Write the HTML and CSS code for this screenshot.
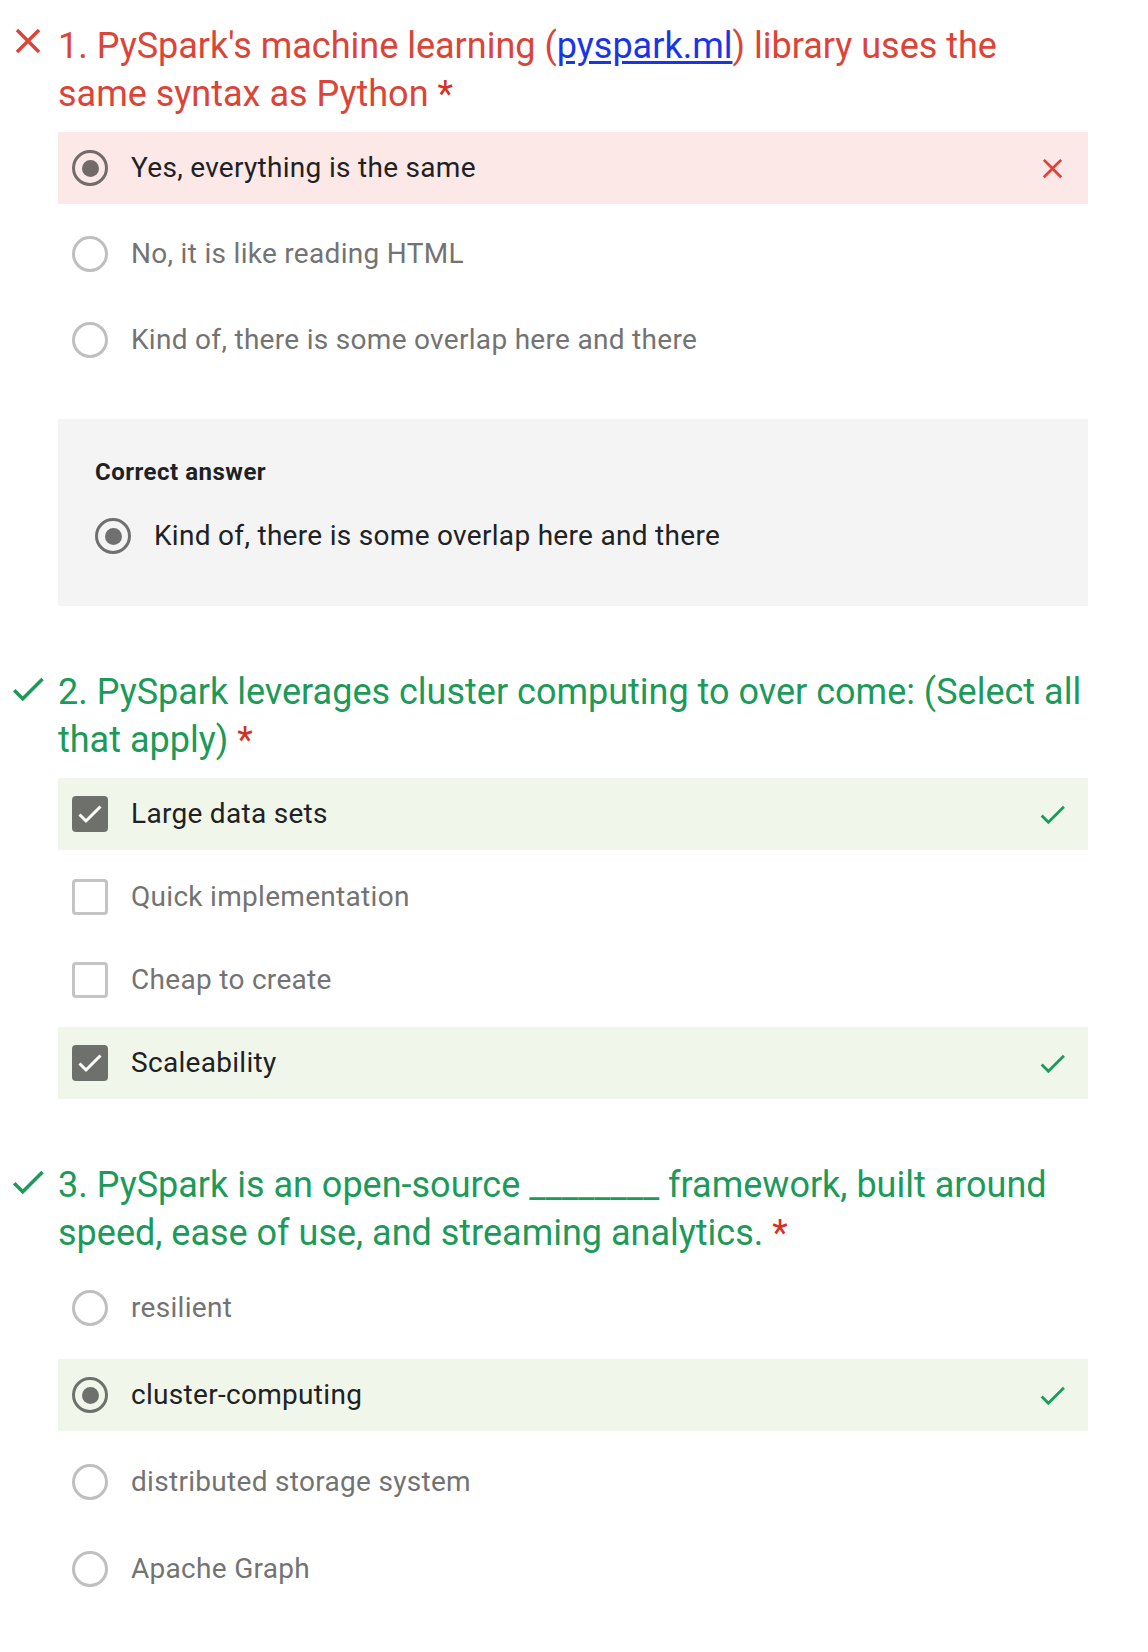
FILE: index.html
```html
<!DOCTYPE html>
<html lang="en">
<head>
<meta charset="utf-8">
<title>Quiz results</title>
<link rel="stylesheet" href="styles.css">
</head>
<body>
<div class="form">

  <section class="q">
    <div class="q-head">
      <svg class="q-icon q-icon-x" viewBox="0 0 24 24"><path d="M19 6.41L17.59 5 12 10.59 6.41 5 5 6.41 10.59 12 5 17.59 6.41 19 12 13.41 17.59 19 19 17.59 13.41 12z"/></svg>
      <div class="q-title wrong">1. PySpark's machine learning (<a href="#" class="link">pyspark.ml</a>) library uses the same syntax as Python <span class="req">*</span></div>
    </div>
    <div class="opts">
      <div class="opt opt-wrong">
        <span class="radio on"></span>
        <span class="opt-text sel">Yes, everything is the same</span>
        <svg class="mark mark-x" viewBox="0 0 24 24"><path d="M19 6.41L17.59 5 12 10.59 6.41 5 5 6.41 10.59 12 5 17.59 6.41 19 12 13.41 17.59 19 19 17.59 13.41 12z"/></svg>
      </div>
      <div class="opt">
        <span class="radio"></span>
        <span class="opt-text">No, it is like reading HTML</span>
      </div>
      <div class="opt">
        <span class="radio"></span>
        <span class="opt-text">Kind of, there is some overlap here and there</span>
      </div>
    </div>
    <div class="correct">
      <div class="correct-label">Correct answer</div>
      <div class="correct-opt">
        <span class="radio on"></span>
        <span class="opt-text sel">Kind of, there is some overlap here and there</span>
      </div>
    </div>
  </section>

  <section class="q">
    <div class="q-head">
      <svg class="q-icon q-icon-ok" viewBox="0 0 24 24"><path d="M9 16.17L4.83 12l-1.42 1.41L9 19 21 7l-1.41-1.41z"/></svg>
      <div class="q-title right">2. PySpark leverages cluster computing to over come: (Select all that apply) <span class="req">*</span></div>
    </div>
    <div class="opts opts-check">
      <div class="opt opt-right">
        <span class="box on"><svg viewBox="0 0 36 36"><polyline points="7.5,18.5 14,25 28.5,10.5"/></svg></span>
        <span class="opt-text sel">Large data sets</span>
        <svg class="mark mark-ok" viewBox="0 0 24 24"><path d="M9 16.17L4.83 12l-1.42 1.41L9 19 21 7l-1.41-1.41z"/></svg>
      </div>
      <div class="opt">
        <span class="box"></span>
        <span class="opt-text">Quick implementation</span>
      </div>
      <div class="opt">
        <span class="box"></span>
        <span class="opt-text">Cheap to create</span>
      </div>
      <div class="opt opt-right">
        <span class="box on"><svg viewBox="0 0 36 36"><polyline points="7.5,18.5 14,25 28.5,10.5"/></svg></span>
        <span class="opt-text sel">Scaleability</span>
        <svg class="mark mark-ok" viewBox="0 0 24 24"><path d="M9 16.17L4.83 12l-1.42 1.41L9 19 21 7l-1.41-1.41z"/></svg>
      </div>
    </div>
  </section>

  <section class="q">
    <div class="q-head">
      <svg class="q-icon q-icon-ok" viewBox="0 0 24 24"><path d="M9 16.17L4.83 12l-1.42 1.41L9 19 21 7l-1.41-1.41z"/></svg>
      <div class="q-title right">3. PySpark is an open-source ________ framework, built around speed, ease of use, and streaming analytics. <span class="req">*</span></div>
    </div>
    <div class="opts opts-loose">
      <div class="opt">
        <span class="radio"></span>
        <span class="opt-text">resilient</span>
      </div>
      <div class="opt opt-right">
        <span class="radio on"></span>
        <span class="opt-text sel">cluster-computing</span>
        <svg class="mark mark-ok" viewBox="0 0 24 24"><path d="M9 16.17L4.83 12l-1.42 1.41L9 19 21 7l-1.41-1.41z"/></svg>
      </div>
      <div class="opt">
        <span class="radio"></span>
        <span class="opt-text">distributed storage system</span>
      </div>
      <div class="opt">
        <span class="radio"></span>
        <span class="opt-text">Apache Graph</span>
      </div>
    </div>
  </section>

</div>
</body>
</html>
```

FILE: styles.css
```css
html, body {
  margin: 0;
  padding: 0;
  background: #ffffff;
}

body {
  font-family: Roboto, "Liberation Sans", Arial, sans-serif;
  color: #202124;
}

.form {
  width: 1088px;
  padding-top: 22px;
}

.q + .q {
  margin-top: 62px;
}

/* ---------- question heading ---------- */
.q-head {
  display: flex;
  align-items: flex-start;
  padding-left: 7px;
  gap: 9px;
}

.q-icon {
  flex: none;
  width: 42px;
  height: 42px;
}

.q-icon-x {
  fill: #db4437;
  margin-top: -2px;
}

.q-icon-ok {
  fill: #1b9a59;
}

.q-title {
  flex: 1;
  font-size: 36px;
  line-height: 48px;
  font-weight: 400;
}

.q-title.wrong {
  color: #db4437;
}

.q-title.right {
  color: #1b9a59;
}

.link {
  color: #1a35e6;
  text-decoration: underline;
  text-underline-offset: 3px;
}

.req {
  color: #d93025;
}

/* ---------- options ---------- */
.opts {
  margin-left: 58px;
  margin-top: 14px;
  display: flex;
  flex-direction: column;
  gap: 14px;
}

.opts-check {
  gap: 11px;
}

.opts-loose {
  margin-top: 15px;
  gap: 15px;
}

.opt {
  display: flex;
  align-items: center;
  height: 72px;
  padding: 0 19px 0 14px;
}

.opt-wrong {
  background: #fbe8e7;
}

.opt-right {
  background: #f0f6ea;
}

.opt-text {
  font-size: 28px;
  line-height: 36px;
  letter-spacing: 0.3px;
  color: #737373;
  margin-left: 23px;
}

.opt-text.sel {
  color: #202124;
}

.mark {
  flex: none;
  width: 33px;
  height: 33px;
  margin-left: auto;
}

.mark-x {
  fill: #db4437;
}

.mark-ok {
  fill: #1b9a59;
}

/* ---------- radio ---------- */
.radio {
  flex: none;
  box-sizing: border-box;
  width: 36px;
  height: 36px;
  border: 3.5px solid #bfbfbf;
  border-radius: 50%;
  display: flex;
  align-items: center;
  justify-content: center;
}

.radio.on {
  border-color: rgba(0, 0, 0, 0.54);
}

.radio.on::after {
  content: "";
  width: 17px;
  height: 17px;
  border-radius: 50%;
  background: rgba(0, 0, 0, 0.54);
}

/* ---------- checkbox ---------- */
.box {
  flex: none;
  box-sizing: border-box;
  width: 36px;
  height: 36px;
  border: 3.5px solid #c4c4c4;
  border-radius: 4px;
  display: flex;
  align-items: center;
  justify-content: center;
}

.box.on {
  border: none;
  background: rgba(0, 0, 0, 0.54);
}

.box svg {
  width: 36px;
  height: 36px;
}

.box svg polyline {
  fill: none;
  stroke: #ffffff;
  stroke-width: 3;
}

/* ---------- correct answer panel ---------- */
.correct {
  margin-left: 58px;
  margin-top: 43px;
  background: #f4f4f4;
  padding: 37px 36px 52px 37px;
}

.correct-label {
  font-size: 24px;
  line-height: 32px;
  font-weight: 700;
  letter-spacing: 0.5px;
  color: #202124;
}

.correct-opt {
  display: flex;
  align-items: center;
  margin-top: 30px;
  height: 36px;
}
```
